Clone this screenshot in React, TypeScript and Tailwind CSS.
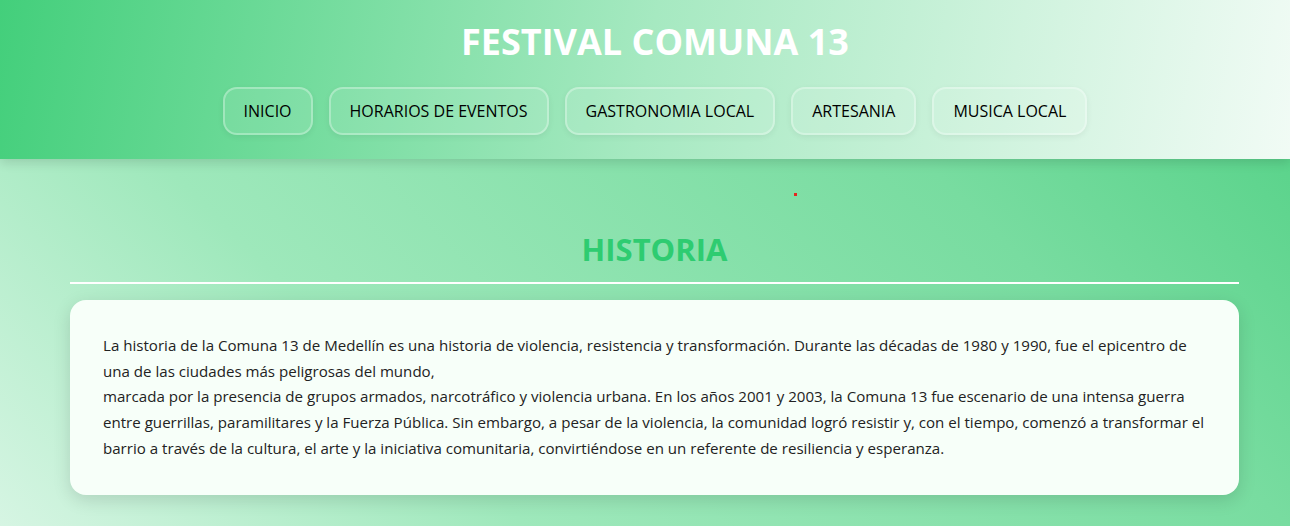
export default function App() {
  const links = ['INICIO', 'HORARIOS DE EVENTOS', 'GASTRONOMIA LOCAL', 'ARTESANIA', 'MUSICA LOCAL'];

  return (
    <div className="relative min-h-screen bg-[linear-gradient(45deg,#d6f5e3_0%,#9ee8bb_29%,#78dca0_71%,#4fd083_100%)] font-['Open_Sans',sans-serif]">
      <header className="relative z-10 flex flex-col items-center bg-[linear-gradient(100deg,#43cf7b_0%,#a6e9c1_50%,#f1fbf5_100%)] pt-[19px] pb-[24px] pl-[20px] shadow-[0_4px_10px_rgba(0,0,0,0.12)]">
        <h1 className="text-[36px] leading-[46px] font-bold text-white">FESTIVAL COMUNA 13</h1>
        <nav className="mt-[22px] flex gap-4">
          {links.map((l) => (
            <a
              key={l}
              href="#"
              className="rounded-[14px] border-2 border-white/30 bg-white/10 px-[19px] py-[11px] text-[16px] leading-[22px] font-medium text-black shadow-[0_2px_6px_rgba(0,0,0,0.06)]"
            >
              {l}
            </a>
          ))}
        </nav>
      </header>

      <span className="absolute left-[794px] top-[193px] h-[3px] w-[3px] bg-[#e5261f]" />

      <main className="ml-[70px] w-[1169px] pt-[68px] pb-8">
        <h2 className="text-center text-[31px] leading-[44px] font-bold text-[#2ecc71]">HISTORIA</h2>
        <div className="mt-[11px] h-[2px] bg-white" />
        <section className="mt-4 rounded-2xl bg-[#f7fff9] px-[33px] py-[33px] shadow-[0_5px_18px_rgba(0,0,0,0.13)]">
          <p className="text-[15.1px] leading-[25.7px] text-[#222]">
            La historia de la Comuna 13 de Medellín es una historia de violencia, resistencia y transformación. Durante las décadas de 1980 y 1990, fue el epicentro de una de las ciudades más peligrosas del mundo,
            <br />
            marcada por la presencia de grupos armados, narcotráfico y violencia urbana. En los años 2001 y 2003, la Comuna 13 fue escenario de una intensa guerra entre guerrillas, paramilitares y la Fuerza Pública. Sin embargo, a pesar de la violencia, la comunidad logró resistir y, con el tiempo, comenzó a transformar el barrio a través de la cultura, el arte y la iniciativa comunitaria, convirtiéndose en un referente de resiliencia y esperanza.
          </p>
        </section>
      </main>
    </div>
  );
}
